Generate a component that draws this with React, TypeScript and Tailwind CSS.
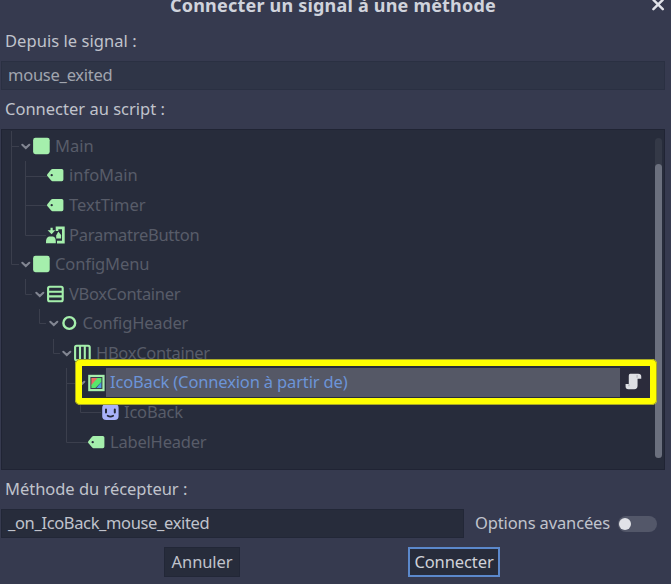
import React from 'react';

type Kind = 'node' | 'label' | 'button' | 'vbox' | 'control' | 'hbox' | 'texture' | 'sprite';

interface Row {
  name: string;
  kind: Kind;
  indent: string;
  tracking: string;
  open?: boolean;
  selected?: boolean;
}

const rows: Row[] = [
  { name: 'Main', kind: 'node', indent: 'pl-[18px]', tracking: 'tracking-normal', open: true },
  { name: 'infoMain', kind: 'label', indent: 'pl-[32px]', tracking: 'tracking-normal' },
  { name: 'TextTimer', kind: 'label', indent: 'pl-[32px]', tracking: 'tracking-normal' },
  { name: 'ParamatreButton', kind: 'button', indent: 'pl-[32px]', tracking: 'tracking-[-0.27px]' },
  { name: 'ConfigMenu', kind: 'node', indent: 'pl-[18px]', tracking: 'tracking-[-0.1px]', open: true },
  { name: 'VBoxContainer', kind: 'vbox', indent: 'pl-[32px]', tracking: 'tracking-[-0.33px]', open: true },
  { name: 'ConfigHeader', kind: 'control', indent: 'pl-[45.5px]', tracking: 'tracking-[-0.17px]', open: true },
  { name: 'HBoxContainer', kind: 'hbox', indent: 'pl-[59px]', tracking: 'tracking-[-0.3px]', open: true },
  { name: 'IcoBack (Connexion à partir de)', kind: 'texture', indent: 'pl-[73px]', tracking: 'tracking-[-0.15px]', open: true, selected: true },
  { name: 'IcoBack', kind: 'sprite', indent: 'pl-[87px]', tracking: 'tracking-[-0.2px]' },
  { name: 'LabelHeader', kind: 'label', indent: 'pl-[73px]', tracking: 'tracking-[-0.2px]' },
];

function NodeIcon({ kind }: { kind: Kind }) {
  const g = '#a5efac';
  return (
    <svg className="h-[18px] w-[18px] shrink-0 overflow-visible" viewBox="0.6 0 18 18" fill="none">
      {kind === 'node' && <rect x="0.7" y="0.8" width="16.6" height="16.4" rx="2.4" fill={g} />}
      {kind === 'label' && (
        <path fill={g} fillRule="evenodd" d="M6 3H15.4Q17 3 17 4.6V13.6Q17 15.2 15.4 15.2H6Q5.4 15.2 4.8 14.6L.9 10Q.3 9.1.9 8.2L4.8 3.6Q5.4 3 6 3ZM5.3 8a1.15 1.15 0 1 0 0 2.3 1.15 1.15 0 0 0 0-2.3Z" />
      )}
      {kind === 'button' && (
        <g fill={g}>
          <path d="M4.1 1.7h2.2v2.6h2.6L5.2 8.2 1.2 4.3h2.9Z" />
          <path d="M-.4 17.2v-1.5C-.4 12 1.4 10.4 3.6 10.4h2.8c2.2 0 3 2.2 3 5.3v1.5Z" />
          <path d="M9.3.6h9v16.8H10.6v-2.7h5V3.3h-3.7V5H9.3Z" />
          <path d="M11.9 5.6 14.7 9v3.6H9.8V9.4Z" />
        </g>
      )}
      {kind === 'vbox' && (
        <g stroke={g} strokeWidth="2.1">
          <rect x="1.7" y="1.8" width="14.6" height="14.4" rx="1.5" />
          <path d="M1.5 6.7h14.8M1.5 11.4h14.8" />
        </g>
      )}
      {kind === 'hbox' && (
        <g stroke={g} strokeWidth="2.1">
          <rect x="1.7" y="1.8" width="14.6" height="14.4" rx="1.5" />
          <path d="M6.6 1.8v14.6M11.4 1.8v14.6" />
        </g>
      )}
      {kind === 'control' && <circle cx="8.9" cy="9" r="5.9" stroke={g} strokeWidth="2.4" />}
      {kind === 'texture' && (
        <g>
          <rect x="0.8" y="0.8" width="16.4" height="16.4" fill={g} />
          <rect x="3" y="3" width="12" height="12" fill="#38404d" />
          <path d="M4 4h7L4 12Z" fill="#e86e62" />
          <path d="M10 4h4v4L8 14H4v-3Z" fill="#58e76b" />
          <path d="M14 8v6H9Z" fill="#4f9ee0" />
        </g>
      )}
      {kind === 'sprite' && (
        <g>
          <rect x="0.8" y="1" width="16.4" height="16" rx="4" fill="#a9b2fb" />
          <path d="M4.6 6.6v2.8M13.4 6.6v2.8" stroke="#252938" strokeWidth="2" strokeLinecap="round" />
          <path d="M6.2 12.7q2.8 1.8 5.6 0" stroke="#252938" strokeWidth="1.7" strokeLinecap="round" />
        </g>
      )}
    </svg>
  );
}

function Chevron() {
  return (
    <svg className="h-[10px] w-[13px]" viewBox="0.4 0 13 10" fill="none">
      <path d="M2.7 3.8 6.2 7l3.5-3.2" stroke="#828692" strokeWidth="2.1" strokeLinecap="round" />
    </svg>
  );
}

function TreeRow({ row }: { row: Row }) {
  return (
    <div className={`flex h-[29.6px] items-center ${row.indent} ${row.tracking}`}>
      <div className="flex w-[13px] shrink-0 items-center">{row.open && <Chevron />}</div>
      <NodeIcon kind={row.kind} />
      {row.selected ? (
        <>
          <div className="flex h-full w-[514px] items-center bg-[#555866] pb-px pl-[4px] text-[#6c94d8]">{row.name}</div>
          <div className="flex h-full w-[30px] items-center bg-[#2b2b3b] pb-[2px] pl-[5px]">
            <svg className="h-[17px] w-[17px]" viewBox="0 0 18 18">
              <path d="M5.5.8H14Q17.2.8 17.2 3.7V6H13.3V13.6Q13.3 17.2 9.8 17.2H3.5Q.6 17.2.6 14V11.6H4V3Q4 .8 5.5.8Z" fill="#dedfe4" />
              <path d="M12.8 2.2V5M4.2 12v2" stroke="#a7a8b0" />
            </svg>
          </div>
        </>
      ) : (
        <div className="pl-[4px]">{row.name}</div>
      )}
    </div>
  );
}

function Guides() {
  return (
    <svg className="pointer-events-none absolute left-0 top-0 h-[339px] w-[662px]" viewBox="2 130 662 339" fill="none" stroke="#3b3f4d" strokeWidth="1">
      <path d="M11.5 131V264.5H19M11.5 146.5H19M25.5 161V235.5H46M25.5 176.5H47M25.5 205.5H47M25.5 279V294.5H32M39.5 309V323.5H46M53.5 339V353.5H60M66.5 368V442.5H88M66.5 383.5H76M80.5 398V412.5H101" />
    </svg>
  );
}

export default function App() {
  return (
    <div className="relative flex h-[584px] w-[671px] flex-col overflow-hidden bg-[#363a4f] font-['Noto_Sans',sans-serif] text-[16.5px] leading-[24px] whitespace-nowrap text-[#c0c3cc]">
      <header className="flex h-[29px] shrink-0 items-start">
        <h1 className="-mt-[7px] ml-[170px] w-[480px] text-[18px] font-bold tracking-[0.2px] text-[#d0d3dc]">Connecter un signal à une méthode</h1>
        <svg className="h-[14px] w-[16px]" viewBox="0 0 16 14">
          <path d="m3.4-.2 9.4 9.4m0-9.4L3.4 9.2" stroke="#e1e3e9" strokeWidth="2.4" strokeLinecap="round" />
        </svg>
      </header>
      <div className="h-[32px] shrink-0 pl-[5px] tracking-[0.05px]">Depuis le signal :</div>
      <div className="ml-px flex h-[29px] w-[664px] shrink-0 items-center border border-[#2a3042] bg-[#2f3547] pb-px pl-[6px] tracking-[-0.25px] text-[#a1a5af]">
        <span>mouse_exited</span>
      </div>
      <div className="flex h-[39px] shrink-0 items-center pb-[2px] pl-[5px]">Connecter au script :</div>
      <div className="relative ml-px flex h-[341px] w-[664px] shrink-0 border border-[#202434] bg-[#272c3b] pt-px text-[#585c69]">
        <Guides />
        <div className="relative w-[648px]">
          {rows.map((row, i) => <TreeRow key={i} row={row} />)}
        </div>
        <div className="mt-[7px] ml-[5px] h-[320px] w-[7px] rounded-full bg-[#343947]">
          <div className="mt-[26px] h-[294px] w-[7px] rounded-full bg-[#6b707e]" />
        </div>
        <div className="absolute top-[229px] left-[72.5px] h-[46px] w-[582px] rounded-[5px] border-[7px] border-[#ffff00] outline outline-1 -outline-offset-1 outline-[#a9aa25]" />
      </div>
      <div className="flex h-[39px] shrink-0 items-center pb-px pl-[5px] tracking-[-0.03px]">Méthode du récepteur :</div>
      <div className="flex h-[29px] shrink-0 items-center pl-px">
        <div className="flex h-[29px] w-[463px] items-center border border-[#222737] bg-[#272c3b] pb-px pl-[6px] tracking-[-0.36px]"><span>_on_IcoBack_mouse_exited</span></div>
        <span className="ml-[11px] w-[143px] pb-px tracking-[-0.13px]">Options avancées</span>
        <div className="h-[16px] w-[39px] rounded-full bg-[#535769] py-[2px] pl-px"><div className="h-[12px] w-[12px] rounded-full bg-[#e1e2e7]" /></div>
      </div>
      <div className="mt-[9px] flex h-[30px] shrink-0 pl-[164px] tracking-[-0.1px]">
        <button className="h-[30px] w-[76px] border border-[#222737] bg-[#272c3b]">Annuler</button>
        <button className="ml-[168px] h-[30px] w-[92px] border-2 border-[#5b88cb] bg-[#272c3b] text-[#d0d2d9]">Connecter</button>
      </div>
    </div>
  );
}
